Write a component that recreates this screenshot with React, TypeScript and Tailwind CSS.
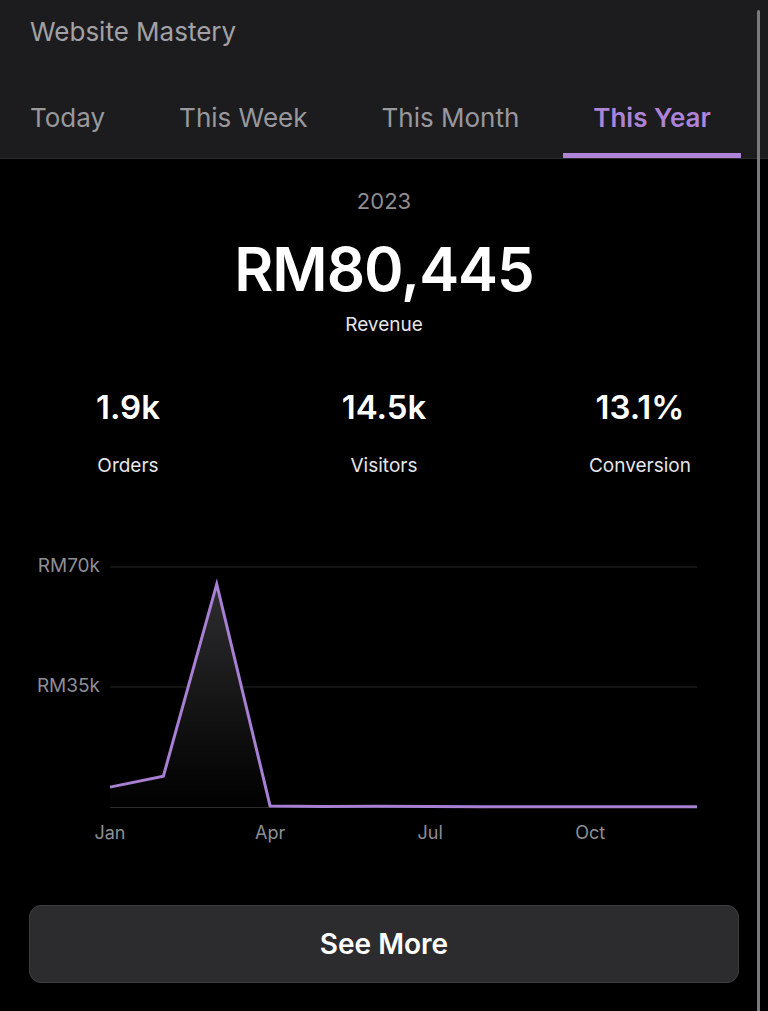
import React from 'react';

const tabs = ['Today', 'This Week', 'This Month', 'This Year'];

// monthly revenue in RM
const revenue = [5800, 9000, 65000, 300, 150, 200, 120, 100, 80, 60, 50, 40];

const chartTop = 26;
const chartBottom = 266;
const chartLeft = 110;
const chartRight = 697;
const maxVal = 70000;

const xAt = (i: number) => chartLeft + (i * (chartRight - chartLeft)) / 11;
const yAt = (v: number) => chartBottom - (v / maxVal) * (chartBottom - chartTop);

const RevenueChart: React.FC = () => {
  const points = revenue.map((v, i) => `${xAt(i)},${yAt(v)}`).join(' ');
  const area = `M${xAt(0)},${chartBottom} L${points.split(' ').join(' L')} L${xAt(11)},${chartBottom} Z`;
  const months = [
    { label: 'Jan', i: 0 },
    { label: 'Apr', i: 3 },
    { label: 'Jul', i: 6 },
    { label: 'Oct', i: 9 }
  ];

  return (
    <svg width="768" height="310" viewBox="0 0 768 310" className="block">
      <defs>
        <linearGradient id="fill" x1="0" y1="40" x2="0" y2={chartBottom} gradientUnits="userSpaceOnUse">
          <stop offset="0%" stopColor="#2e2e30" />
          <stop offset="100%" stopColor="#000000" />
        </linearGradient>
      </defs>
      <line x1={chartLeft} y1={chartTop} x2={chartRight} y2={chartTop} stroke="#262628" strokeWidth="1" />
      <line x1={chartLeft} y1={146} x2={chartRight} y2={146} stroke="#262628" strokeWidth="1" />
      <line x1={chartLeft} y1={chartBottom} x2={chartRight} y2={chartBottom} stroke="#3a3a3c" strokeWidth="1.5" />
      <text x="100" y={chartTop} textAnchor="end" dominantBaseline="middle" fill="#8e8e93" fontSize="19" fontFamily="Inter, sans-serif">
        RM70k
      </text>
      <text x="100" y={146} textAnchor="end" dominantBaseline="middle" fill="#8e8e93" fontSize="19" fontFamily="Inter, sans-serif">
        RM35k
      </text>
      <path d={area} fill="url(#fill)" />
      <polyline points={points} fill="none" stroke="#a77fd3" strokeWidth="3" strokeLinejoin="miter" />
      {months.map((m) => (
        <text
          key={m.label}
          x={xAt(m.i)}
          y={293}
          textAnchor="middle"
          dominantBaseline="middle"
          fill="#8e8e93"
          fontSize="18"
          fontFamily="Inter, sans-serif"
        >
          {m.label}
        </text>
      ))}
    </svg>
  );
};

export default function App() {
  const active = 'This Year';

  return (
    <div className="relative min-h-screen bg-black text-white font-['Inter',sans-serif] overflow-hidden">
      {/* Header */}
      <div className="bg-[#1c1c1e] border-b border-[#2a2a2c]">
        <div className="pl-[30px] pt-[16px] text-[26px] leading-[32px] text-[#a1a1a6]">Website Mastery</div>
        <div className="flex gap-[14px] mt-[54px]">
          {tabs.map((t) => (
            <div
              key={t}
              className={
                t === active
                  ? 'px-[30px] pb-[19px] text-[26px] leading-[32px] font-semibold text-[#ad84d8] border-b-[5px] border-[#ad84d8]'
                  : 'px-[30px] pb-[19px] text-[26px] leading-[32px] text-[#98989d] border-b-[5px] border-transparent'
              }
            >
              {t}
            </div>
          ))}
        </div>
      </div>

      {/* Summary */}
      <div className="flex flex-col items-center">
        <div className="mt-[28px] text-[22px] leading-[28px] text-[#8e8e93]">2023</div>
        <div className="mt-[24px] text-[60px] leading-none font-semibold tracking-[-1px]">RM80,445</div>
        <div className="mt-[14px] text-[19px] leading-[24px] text-[#e5e5ea]">Revenue</div>
      </div>

      <div className="grid grid-cols-3 mt-[54px]">
        {[
          { value: '1.9k', label: 'Orders' },
          { value: '14.5k', label: 'Visitors' },
          { value: '13.1%', label: 'Conversion' }
        ].map((s) => (
          <div key={s.label} className="flex flex-col items-center">
            <div className="text-[33px] leading-none font-semibold">{s.value}</div>
            <div className="mt-[30px] text-[19px] leading-[24px] text-[#e5e5ea]">{s.label}</div>
          </div>
        ))}
      </div>

      {/* Chart */}
      <div className="mt-[63px]">
        <RevenueChart />
      </div>

      {/* Action */}
      <div className="px-[29px] mt-[54px] pb-[29px]">
        <button className="w-full h-[78px] rounded-[12px] bg-[#2c2c2e] border-[1.5px] border-[#3e3e40] text-[28px] font-semibold text-white">
          See More
        </button>
      </div>

      {/* Scroll indicator */}
      <div className="absolute right-[8px] top-[10px] bottom-0 w-[3px] rounded-full bg-[#7a7a7e]" />
    </div>
  );
}
